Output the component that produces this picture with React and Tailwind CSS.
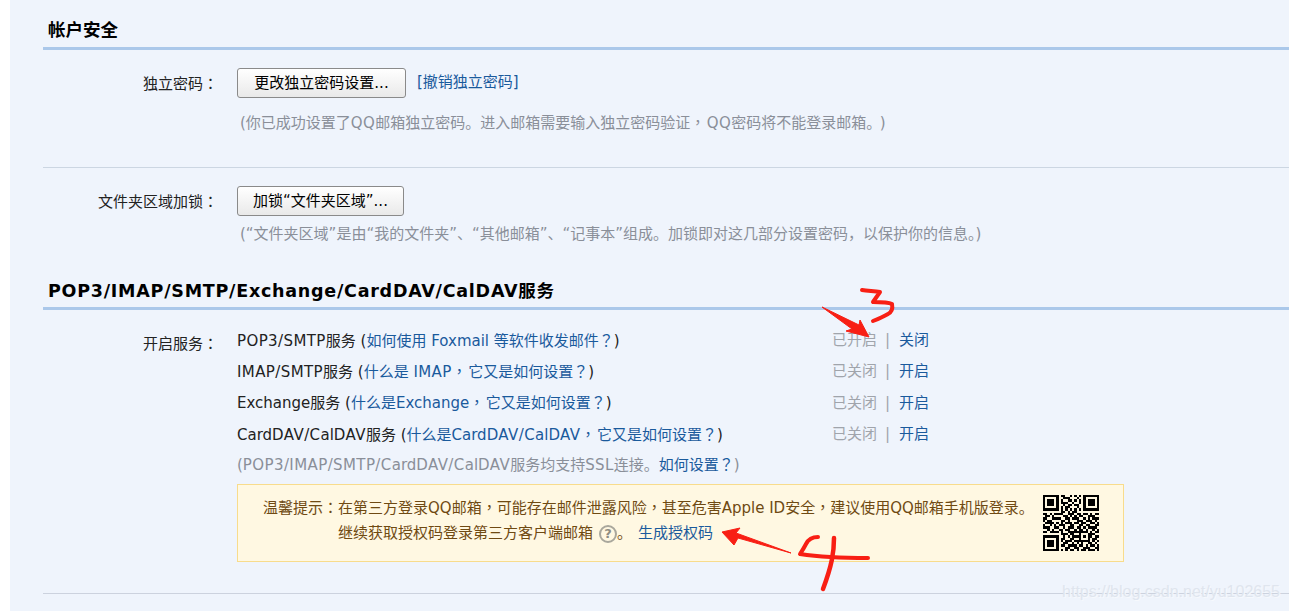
import React from 'react';

const QR = [
  '1111111011001010101111111',
  '1000001001110001001000001',
  '1011101010011010101011101',
  '1011101011100100101011101',
  '1011101001011011001011101',
  '1000001010110001001000001',
  '1111111010101010101111111',
  '0000000011010110000000000',
  '1101011110011101101101011',
  '0110100001101010110011100',
  '1100111100110111001010111',
  '1011000011010001110111010',
  '0111101010111011011001101',
  '1001010111001100110110011',
  '1110011001011101101011110',
  '0010100110110010110100101',
  '1101111010011111111101011',
  '0000000011101100100011100',
  '1111111001010111101011011',
  '1000001011001100100010110',
  '1011101010111011111110101',
  '1011101001100101010011010',
  '1011101011011110110101101',
  '1000001000110011001110011',
  '1111111010101101011011101',
];

const services = [
  { name: 'POP3/SMTP服务', help: '如何使用 Foxmail 等软件收发邮件？', status: '已开启', action: '关闭', h: 'h-[31px]' },
  { name: 'IMAP/SMTP服务', help: '什么是 IMAP，它又是如何设置？', status: '已关闭', action: '开启', h: 'h-[31px]' },
  { name: 'Exchange服务', help: '什么是Exchange，它又是如何设置？', status: '已关闭', action: '开启', h: 'h-[32px]' },
  { name: 'CardDAV/CalDAV服务', help: '什么是CardDAV/CalDAV，它又是如何设置？', status: '已关闭', action: '开启', h: 'h-[31px]' },
];

// the reference centres ，：？ in their box, which only the TC face does
const T = ({ children }) =>
  children.split(/([，：？])/).map((part, i) =>
    i % 2 ? <span key={i} className="font-['Noto_Sans_CJK_TC']">{part}</span> : part
  );

// same, plus the slightly wider capitals and comma of the service rows
const W = ({ children }) =>
  children.split(/([，：？]|[A-Z0-9/]{2,})/).map((part, i) => {
    if (!(i % 2)) return part;
    if (part === '，') return <span key={i} className="mr-[1.5px] font-['Noto_Sans_CJK_TC']">{part}</span>;
    if (part === '？' || part === '：') return <span key={i} className="font-['Noto_Sans_CJK_TC']">{part}</span>;
    return <span key={i} className="tracking-[0.4px]">{part}</span>;
  });

const SectionTitle = ({ children, className }) => (
  <h2 className={`border-b-[3px] border-[#abc8ea] pl-[5px] text-[17.5px] leading-[30px] font-bold text-black ${className}`}>
    {children}
  </h2>
);

const Label = ({ children }) => (
  <div className="w-[194px] shrink-0 pt-[1px] pr-[19px] text-right text-[15px] text-[#222]">{children}</div>
);

const Button = ({ children, className }) => (
  <button className={`h-[30px] rounded-[3px] border border-[#8a8a8a] bg-gradient-to-b from-white to-[#e9e9e9] pt-[1px] text-[15px] whitespace-nowrap text-black ${className}`}>
    {children}
  </button>
);

const QrCode = () => (
  <svg width="56" height="56" viewBox="0 0 25 25" shapeRendering="crispEdges" className="shrink-0">
    {QR.map((row, y) =>
      row.split('').map((c, x) => (c === '1' ? <rect key={`${x}-${y}`} x={x} y={y} width="1" height="1" fill="#000" /> : null))
    )}
  </svg>
);

// red marker scribbles drawn over the page
const Annotations = () => (
  <svg width="1289" height="611" className="pointer-events-none absolute inset-0">
    <path d="M822 307 L859 325 L860 320 L869 337 L846 331 L852 329 Z" fill="#f81f14" stroke="#f81f14" strokeWidth="1" strokeLinejoin="round" />
    <path d="M862 290 C868 291 874 291 880 292 L873 302 C880 302 888 302 892 304 C893 309 892 312 888 314 C883 317 878 319 873 321" fill="none" stroke="#f81f14" strokeWidth="4" strokeLinecap="round" strokeLinejoin="round" />
    <path d="M722 532 L740 528 L736 533 L791 553 L738 538 L734 545 Z" fill="#f81f14" stroke="#f81f14" strokeWidth="1" strokeLinejoin="round" />
    <path d="M818 537 C812 537 808 540 806 544 C804 548 802 551 800 554 C820 557 845 558 868 558" fill="none" stroke="#f81f14" strokeWidth="4" strokeLinecap="round" strokeLinejoin="round" />
    <path d="M834 538 C834 552 832 565 823 589" fill="none" stroke="#f81f14" strokeWidth="4.5" strokeLinecap="round" />
  </svg>
);

export default function App() {
  return (
    <div className="relative flex h-[611px] w-[1289px] overflow-hidden bg-white font-['DejaVu_Sans','Noto_Sans_CJK_SC',sans-serif]">
      <div className="w-[10px] shrink-0" />
      <main className="flex-1 bg-[#eff4fc] pl-[33px]">
        <SectionTitle className="pt-[15px] pb-[2px]">帐户安全</SectionTitle>

        <div className="flex items-center pt-[18px]">
          <Label><T>独立密码：</T></Label>
          <Button className="w-[169px]">更改独立密码设置...</Button>
          <a className="ml-[11px] -translate-y-[1px] text-[15px] text-[#1a5a9c]">[撤销独立密码]</a>
        </div>
        <p className="mt-[14px] ml-[197px] text-[15px] leading-[20px] whitespace-nowrap text-[#8a8f99]">
          <W>(你已成功设置了QQ邮箱独立密码。进入邮箱需要输入独立密码验证，QQ密码将不能登录邮箱。</W><span className="ml-[6px]">)</span>
        </p>
        <hr className="mt-[34px] border-[#ccd6e2]" />

        <div className="flex items-center pt-[18px]">
          <Label><T>文件夹区域加锁：</T></Label>
          <Button className="w-[167px]">加锁“文件夹区域”...</Button>
        </div>
        <p className="mt-[8px] ml-[197px] text-[15px] leading-[20px] whitespace-nowrap text-[#8a8f99]">
          (“文件夹区域”是由“我的文件夹”、“其他邮箱”、“记事本”组成。加锁即对这几部分设置密码，以保护你的信息。)
        </p>

        <SectionTitle className="mt-[32px] pb-[1px] tracking-[0.75px]">POP3/IMAP/SMTP/Exchange/CardDAV/CalDAV服务</SectionTitle>

        <div className="flex pt-[15px]">
          <Label><span className="leading-[34px]"><T>开启服务：</T></span></Label>
          <div className="flex-1">
            {services.map((s) => (
              <div key={s.name} className={`flex items-center text-[15px] ${s.h}`}>
                <div className="w-[595px] shrink-0 whitespace-nowrap text-[#222]">
                  <W>{s.name}</W> (<a className="text-[#1a5a9c]"><W>{s.help}</W></a>)
                </div>
                <span className="w-[53px] text-[#a0a4ab]">{s.status}</span>
                <span className="w-[14px] text-[#a0a4ab]">|</span>
                <a className="text-[#1a5a9c]">{s.action}</a>
              </div>
            ))}
            <p className="h-[31px] text-[15px] leading-[27px] whitespace-nowrap text-[#8a8f99]">
              <W>(POP3/IMAP/SMTP/CardDAV/CalDAV服务均支持SSL连接。</W><a className="text-[#1a5a9c]"><T>如何设置？</T></a>)
            </p>
            <div className="mt-[3px] flex h-[78px] w-[887px] items-center border border-[#f8dc8c] bg-[#fff8e2] pr-[24px] pl-[25px]">
              <div className="flex-1 pb-[6px] text-[15px] leading-[25px] whitespace-nowrap text-[#6f4a12]">
                <p><T>温馨提示：在第三方登录QQ邮箱，可能存在邮件泄露风险，甚至危害Apple ID安全，建议使用QQ邮箱手机版登录。</T></p>
                <p className="flex items-center pl-[75px]">
                  继续获取授权码登录第三方客户端邮箱
                  <span className="ml-[6px] flex h-[18px] w-[18px] items-center justify-center rounded-full border-2 border-[#a9a79c] text-[13px] leading-none font-bold text-[#8f8d82]">?</span>
                  。
                  <a className="ml-[6px] text-[#1a5a9c]">生成授权码</a>
                </p>
              </div>
              <QrCode />
            </div>
          </div>
        </div>
        <hr className="mt-[31px] border-[#ccd2de]" />
      </main>
      <Annotations />
      <span className="absolute top-[582px] right-[9px] font-['Liberation_Sans',sans-serif] text-[16px] leading-[20px] text-[#dfe5ee] [text-shadow:1px_1px_0_#f6f9fd]">
        https://blog.csdn.net/yu102655
      </span>
    </div>
  );
}
